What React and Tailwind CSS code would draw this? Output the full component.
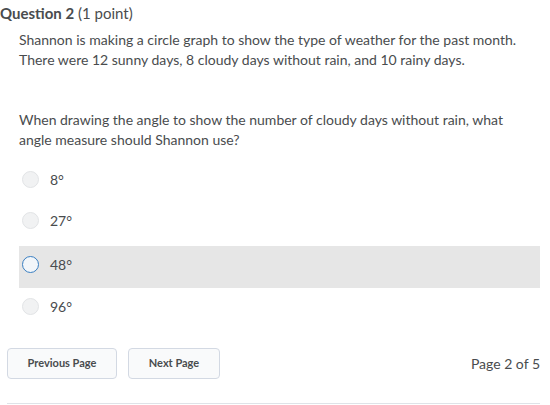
import React from 'react';

const OPTIONS = [
  { label: '8°', row: 'h-[41px]' },
  { label: '27°', row: 'h-[41px]' },
  { label: '48°', row: 'h-[42px] mt-[5px] pb-[6px] bg-[#e6e6e6]', selected: true },
  { label: '96°', row: 'h-[36px]' },
];

const Radio = ({ selected }) => (
  <span
    className={`w-[17px] h-[17px] rounded-full shrink-0 ${
      selected ? 'border-[1.5px] border-[#3a7fc1] bg-[#f2f6fa]' : 'border border-[#e2e4e6] bg-[#f1f2f3]'
    }`}
  />
);

export default function App() {
  return (
    <div className="w-[550px] h-[405px] bg-white text-[#494c4e] font-['Lato',sans-serif] overflow-hidden">
      <div className="text-[15px] leading-[20px] pt-[3px]">
        <span className="font-bold">Question 2</span> (1 point)
      </div>

      <div className="pl-[19px] pr-[10px] text-[14px] leading-[20px] mt-[7px]">
        <p>Shannon is making a circle graph to show the type of weather for the past month.</p>
        <p>There were 12 sunny days, 8 cloudy days without rain, and 10 rainy days.</p>
        <p className="mt-[40px] max-w-[500px]">
          When drawing the angle to show the number of cloudy days without rain, what angle measure should Shannon use?
        </p>
      </div>

      <div className="mt-[9px] mr-[10px]">
        {OPTIONS.map((o) => (
          <div key={o.label} className={`ml-[19px] flex items-center gap-[11px] pl-[3px] ${o.row}`}>
            <Radio selected={o.selected} />
            <span className="text-[14px]">{o.label}</span>
          </div>
        ))}
      </div>

      <div className="flex items-center mt-[24px] pl-[7px] pr-[10px]">
        <button className="h-[31px] w-[110px] rounded-[4px] border border-[#d3d9e3] bg-[#f9fafb] text-[11px] font-bold">
          Previous Page
        </button>
        <button className="h-[31px] w-[92px] ml-[11px] rounded-[4px] border border-[#d3d9e3] bg-[#f9fafb] text-[11px] font-bold">
          Next Page
        </button>
        <span className="ml-auto text-[14px]">Page 2 of 5</span>
      </div>

      <div className="mt-[24px] ml-[7px] mr-[10px] border-t border-[#dfe3e8]" />
    </div>
  );
}
